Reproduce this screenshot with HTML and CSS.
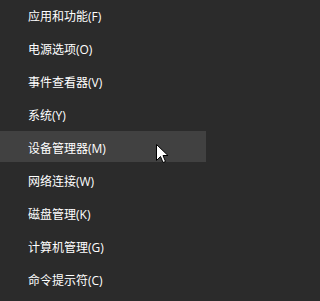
FILE: index.html
```html
<!DOCTYPE html>
<html lang="zh-CN">
<head>
<meta charset="utf-8">
<link rel="stylesheet" href="styles.css">
</head>
<body>
<ul class="menu">
  <li class="item">应用和功能(F)</li>
  <li class="item">电源选项(O)</li>
  <li class="item">事件查看器(V)</li>
  <li class="item">系统(Y)</li>
  <li class="item active">设备管理器(M)</li>
  <li class="item">网络连接(W)</li>
  <li class="item">磁盘管理(K)</li>
  <li class="item">计算机管理(G)</li>
  <li class="item">命令提示符(C)</li>
</ul>
<svg class="cursor" width="13" height="20" viewBox="0 0 13 20">
  <path d="M0.5 0.5 L0.5 16.5 L4.5 12.5 L7 18.5 L9.5 17.5 L7 11.5 L12 11.5 Z" fill="#ffffff" stroke="#000000" stroke-width="1" stroke-linejoin="miter"/>
</svg>
</body>
</html>
```
FILE: styles.css
```css
html, body {
  margin: 0;
  padding: 0;
  background: #2b2b2b;
  width: 206px;
  height: 301px;
  overflow: hidden;
}
.menu {
  list-style: none;
  margin: 0;
  padding: 0;
  display: flex;
  flex-direction: column;
}
.item {
  height: 33px;
  line-height: 33px;
  padding-left: 28px;
  font-family: "Open Sans", "Noto Sans CJK SC", sans-serif;
  font-size: 12px;
  color: #ffffff;
  white-space: nowrap;
}
.item.active {
  background: #414141;
  height: 31px;
  line-height: 35px;
  margin-top: -1px;
  margin-bottom: 3px;
}
.cursor {
  position: absolute;
  left: 156px;
  top: 144px;
}
```
